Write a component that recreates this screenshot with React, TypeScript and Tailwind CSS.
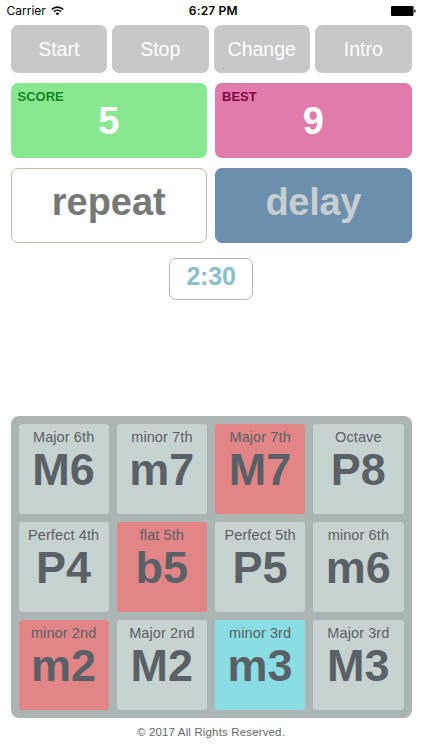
type Tile = { label: string; note: string; color?: string };

const buttons = ["Start", "Stop", "Change", "Intro"];

const tiles: Tile[] = [
  { label: "Major 6th", note: "M6" },
  { label: "minor 7th", note: "m7" },
  { label: "Major 7th", note: "M7", color: "bg-[#e28587]" },
  { label: "Octave", note: "P8" },
  { label: "Perfect 4th", note: "P4" },
  { label: "flat 5th", note: "b5", color: "bg-[#e28587]" },
  { label: "Perfect 5th", note: "P5" },
  { label: "minor 6th", note: "m6" },
  { label: "minor 2nd", note: "m2", color: "bg-[#e28587]" },
  { label: "Major 2nd", note: "M2" },
  { label: "minor 3rd", note: "m3", color: "bg-[#8adde3]" },
  { label: "Major 3rd", note: "M3" },
];

function StatusBar() {
  return (
    <div className="grid grid-cols-3 items-center h-[25px] pl-[6.5px] pr-[6px] pb-[3px] font-[Inter,sans-serif] text-[12px] leading-[22px] text-black">
      <div className="flex items-center gap-[5px]">
        <span>Carrier</span>
        <svg width="13" height="10" viewBox="0 0 13 10" fill="none" stroke="#000" strokeWidth="1.6">
          <path d="M0.8 3.5C4 0.3 9 0.3 12.2 3.5" />
          <path d="M2.9 5.7C5 3.7 8 3.7 10.1 5.7" />
          <path d="M6.5 9.4L4.5 7.3C5.6 6.2 7.4 6.2 8.5 7.3Z" fill="#000" stroke="none" />
        </svg>
      </div>
      <span className="pl-[4px] text-center font-semibold tracking-[0.15px]">6:27 PM</span>
      <svg className="justify-self-end" width="25" height="10" viewBox="0 0 25 10">
        <rect width="22.5" height="10" rx="1.2" fill="#000" />
        <path d="M23.3 3.3C25.2 3.8 25.2 6.2 23.3 6.7Z" fill="#000" />
      </svg>
    </div>
  );
}

function ScoreCard({ title, value, className }: { title: string; value: number; className: string }) {
  return (
    <div className={`h-[75px] rounded-[7px] font-bold ${className}`}>
      <div className="pl-[7px] pt-[6px] text-[13px] leading-[16px]">{title}</div>
      <div className="text-center text-[38px] leading-[32px] text-white">{value}</div>
    </div>
  );
}

export default function App() {
  return (
    <div className="w-[422px] h-[750px] overflow-hidden bg-white font-['Liberation_Sans',Arial,sans-serif]">
      <StatusBar />
      <div className="px-[10.5px]">
        <div className="grid grid-cols-4 gap-[5px]">
          {buttons.map((name) => (
            <button
              key={name}
              className="h-[47.5px] rounded-[7px] bg-[#c8c8c8] pt-[2px] text-[19.5px] leading-[45px] text-white"
            >
              {name}
            </button>
          ))}
        </div>

        <div className="grid grid-cols-2 gap-x-[8px] gap-y-[10px] mt-[10.5px]">
          <ScoreCard title="SCORE" value={5} className="bg-[#87e891] text-[#158421]" />
          <ScoreCard title="BEST" value={9} className="bg-[#e07bab] text-[#7d0540]" />
          <button className="h-[75px] rounded-[7px] border border-[#ccb8a8] bg-white pb-[7px] text-[38px] leading-[44px] font-bold text-[#777978]">
            repeat
          </button>
          <button className="h-[75px] rounded-[7px] border border-[#7187ad] bg-[#6b90ad] pb-[7px] text-[38px] leading-[44px] font-bold tracking-[-0.3px] text-[#c8cdcf]">
            delay
          </button>
        </div>

        <div className="mx-auto mt-[15px] w-[84px] h-[42px] rounded-[7px] border border-[#b4b4b4] text-center text-[25px] leading-[34px] font-bold tracking-[-0.2px] text-[#8bbdcf]">
          2:30
        </div>

        <div className="grid grid-cols-4 gap-x-[8px] gap-y-[7.6px] mt-[116px] h-[302px] rounded-[8px] bg-[#abb6b4] p-[8px]">
          {tiles.map(({ label, note, color }) => (
            <div key={note} className={`rounded-[3px] text-center text-[#5a6166] ${color ?? "bg-[#c7d3d1]"}`}>
              <div className="pt-[5px] text-[14.5px] leading-[17px] tracking-[0.1px]">{label}</div>
              <div className="text-[45px] leading-[48px] font-bold">{note}</div>
            </div>
          ))}
        </div>

        <footer className="mt-[7px] text-center text-[11.5px] leading-[14px] tracking-[0.15px] text-[#666]">
          © 2017 All Rights Reserved.
        </footer>
      </div>
    </div>
  );
}
